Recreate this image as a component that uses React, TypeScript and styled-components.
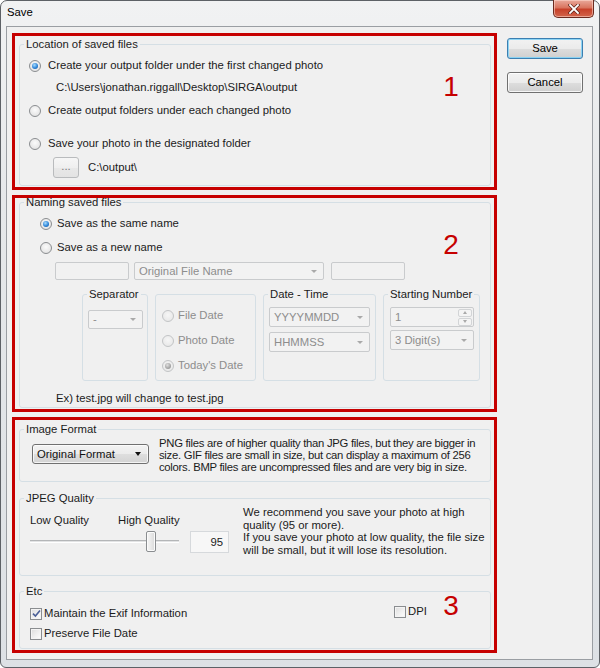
import React from "react";
import styled, { createGlobalStyle } from "styled-components";

const GlobalStyle = createGlobalStyle`
  html, body { margin: 0; padding: 0; background: #ffffff; }
  body {
    width: 600px; height: 668px; overflow: hidden;
    font-family: "Liberation Sans", Arial, sans-serif;
    font-size: 11.3px;
    color: #1b1b1b;
  }
  * { box-sizing: border-box; }
`;

const Window = styled.div`
  width: 600px;
  height: 668px;
  display: flex;
  flex-direction: column;
  border: 1px solid #5d6166;
  border-radius: 7px 7px 6px 6px;
  background: linear-gradient(180deg, #f1f2f3 0%, #e6e8ea 30%, #dde1e5 100%);
`;

const TitleBar = styled.div`
  height: 25px;
  flex: none;
  display: flex;
  align-items: flex-start;
  justify-content: space-between;
  padding-left: 6px;
`;

const Title = styled.span`
  margin-top: 5px;
  line-height: 13px;
  color: #000;
`;

const CloseButton = styled.div`
  width: 41px;
  height: 18px;
  margin: -1px 5px 0 0;
  border: 1px solid #6b2a1f;
  border-top: none;
  border-radius: 0 0 5px 5px;
  background: linear-gradient(180deg, #e9a99b 0%, #d9755f 45%, #c7412a 55%, #d2654c 100%);
  box-shadow: inset 0 0 0 1px rgba(255, 220, 210, 0.55);
  display: flex;
  align-items: center;
  justify-content: center;
`;

const Client = styled.div`
  flex: 1;
  margin: 0 6px 7px 5px;
  border: 1px solid #9a9ea3;
  background: #f0f0f0;
  display: flex;
  align-items: flex-start;
  padding: 6px 0 0 5px;
`;

const Sections = styled.div`
  width: 485px;
  flex: none;
  display: flex;
  flex-direction: column;
  gap: 5px;
`;

const Section = styled.section<{ $h: number; $pad: string }>`
  position: relative;
  height: ${(p) => p.$h}px;
  border: 3px solid #c60000;
  padding: ${(p) => p.$pad};
  display: flex;
  flex-direction: column;
`;

const Marker = styled.span<{ $top: number }>`
  position: absolute;
  left: 421px;
  top: ${(p) => p.$top}px;
  width: 30px;
  text-align: center;
  font-family: "Liberation Sans", Arial, sans-serif;
  font-size: 28px;
  line-height: 28px;
  color: #c60000;
`;

const Group = styled.fieldset<{ $h?: number; $w?: number; $top?: number }>`
  margin: ${(p) => p.$top ?? 0}px 0 0 0;
  padding: 0;
  min-width: 0;
  min-inline-size: 0;
  border: 1px solid #d5dfe5;
  border-radius: 3px;
  ${(p) => (p.$h ? `height: ${p.$h}px; flex: none;` : "flex: 1;")}
  ${(p) => (p.$w ? `width: ${p.$w}px; flex: none;` : "")}
`;

const Legend = styled.legend`
  margin-left: 4px;
  padding: 0 2px;
  line-height: 13px;
  color: #1b1b1b;
`;

const Panel = styled.div<{ $w: number; $h: number; $top: number }>`
  width: ${(p) => p.$w}px;
  height: ${(p) => p.$h}px;
  margin-top: ${(p) => p.$top}px;
  flex: none;
  border: 1px solid #d5dfe5;
  border-radius: 3px;
`;

const Body = styled.div<{ $pad?: string; $row?: boolean }>`
  padding: ${(p) => p.$pad ?? "0"};
  display: flex;
  flex-direction: ${(p) => (p.$row ? "row" : "column")};
  align-items: flex-start;
`;

const Row = styled.div<{ $top?: number; $indent?: number; $gap?: number; $h?: number; $muted?: boolean }>`
  display: flex;
  align-items: center;
  height: ${(p) => p.$h ?? 13}px;
  margin-top: ${(p) => p.$top ?? 0}px;
  margin-left: ${(p) => p.$indent ?? 0}px;
  gap: ${(p) => p.$gap ?? 0}px;
  white-space: nowrap;
  line-height: 13px;
  color: ${(p) => (p.$muted ? "#8d8d8d" : "#1b1b1b")};
`;

const Radio = styled.span<{ $checked?: boolean; $disabled?: boolean }>`
  width: 12px;
  height: 12px;
  flex: none;
  border-radius: 50%;
  border: 1px solid ${(p) => (p.$disabled ? "#c2c4c6" : "#8a8d90")};
  background: ${(p) =>
    p.$disabled
      ? "radial-gradient(circle at 50% 40%, #f6f6f6 0%, #e4e4e4 100%)"
      : "radial-gradient(circle at 50% 40%, #fbfbfb 0%, #e3e3e3 80%, #d4d4d4 100%)"};
  display: flex;
  align-items: center;
  justify-content: center;
  &::after {
    content: "";
    width: 6px;
    height: 6px;
    border-radius: 50%;
    display: ${(p) => (p.$checked ? "block" : "none")};
    background: ${(p) =>
      p.$disabled
        ? "radial-gradient(circle at 40% 35%, #e0e0e0 0%, #a4a4a4 60%, #8a8a8a 100%)"
        : "radial-gradient(circle at 40% 35%, #a8dcff 0%, #2f86d8 55%, #0d4a95 100%)"};
  }
`;

const Check = styled.span`
  width: 12px;
  height: 12px;
  flex: none;
  border: 1px solid #8a8d90;
  background: linear-gradient(135deg, #dcdcdc 0%, #f2f2f2 60%, #fdfdfd 100%);
  box-shadow: inset 0 0 0 1px #f4f4f4;
  display: flex;
  align-items: center;
  justify-content: center;
`;

const Input = styled.div<{ $w: number; $h: number; $left?: number }>`
  width: ${(p) => p.$w}px;
  height: ${(p) => p.$h}px;
  margin-left: ${(p) => p.$left ?? 0}px;
  flex: none;
  border: 1px solid #c9cbcd;
  border-radius: 2px;
  background: #f1f1f1;
`;

const Combo = styled.div<{ $w: number; $h: number; $top?: number; $left?: number }>`
  width: ${(p) => p.$w}px;
  height: ${(p) => p.$h}px;
  margin-top: ${(p) => p.$top ?? 0}px;
  margin-left: ${(p) => p.$left ?? 0}px;
  flex: none;
  border: 1px solid #c9cbcd;
  border-radius: 2px;
  background: #f2f2f2;
  color: #8d8d8d;
  display: flex;
  align-items: center;
  justify-content: space-between;
  padding: 0 6px 0 4px;
  line-height: 13px;
  white-space: nowrap;
`;

const Arrow = styled.span<{ $dark?: boolean }>`
  width: 0;
  height: 0;
  flex: none;
  border-left: ${(p) => (p.$dark ? 3.5 : 3)}px solid transparent;
  border-right: ${(p) => (p.$dark ? 3.5 : 3)}px solid transparent;
  border-top: ${(p) => (p.$dark ? 4 : 3)}px solid ${(p) => (p.$dark ? "#111" : "#a9a9a9")};
`;

const FormatCombo = styled.div`
  width: 117px;
  height: 20px;
  margin: 8px 0 0 12px;
  flex: none;
  border: 1px solid #707070;
  border-radius: 3px;
  background: linear-gradient(180deg, #f3f3f3 0%, #ebebeb 50%, #dedede 51%, #d3d3d3 100%);
  box-shadow: inset 0 0 0 1px rgba(255, 255, 255, 0.75);
  display: flex;
  align-items: center;
  justify-content: space-between;
  padding: 0 7px 0 4px;
  color: #111;
  white-space: nowrap;
`;

const Spin = styled.div`
  width: 84px;
  height: 20px;
  margin: 6px 0 0 6px;
  border: 1px solid #c9cbcd;
  border-radius: 2px;
  background: #f2f2f2;
  color: #8d8d8d;
  display: flex;
  align-items: center;
  justify-content: space-between;
  padding: 0 1px 0 4px;
`;

const SpinButtons = styled.div`
  width: 14px;
  height: 17px;
  display: flex;
  flex-direction: column;
  gap: 1px;
`;

const SpinButton = styled.div<{ $up?: boolean }>`
  flex: 1;
  border: 1px solid #d2d4d6;
  border-radius: 2px;
  background: #f4f4f4;
  display: flex;
  align-items: center;
  justify-content: center;
  &::after {
    content: "";
    width: 0;
    height: 0;
    border-left: 2.5px solid transparent;
    border-right: 2.5px solid transparent;
    ${(p) => (p.$up ? "border-bottom: 3px solid #a9a9a9;" : "border-top: 3px solid #a9a9a9;")}
  }
`;

const Browse = styled.div`
  width: 26px;
  height: 21px;
  flex: none;
  border: 1px solid #b9bbbd;
  border-radius: 3px;
  background: linear-gradient(180deg, #f6f6f6 0%, #efefef 50%, #e8e8e8 51%, #e3e3e3 100%);
  color: #7a7a7a;
  display: flex;
  align-items: center;
  justify-content: center;
  line-height: 13px;
  padding-bottom: 2px;
`;

const SubRow = styled.div`
  display: flex;
  align-items: flex-start;
  gap: 7px;
  margin: 8px 0 0 62px;
`;

const Paragraph = styled.div<{ $left: number; $lh: number; $tight?: number }>`
  margin: 1px 0 0 ${(p) => p.$left}px;
  line-height: ${(p) => p.$lh}px;
  letter-spacing: ${(p) => p.$tight ?? 0}px;
  color: #1b1b1b;
  white-space: nowrap;
`;

const Line = styled.div``;

const QualityBlock = styled.div`
  margin-left: 10px;
  display: flex;
  flex-direction: column;
`;

const QualityLabels = styled.div`
  display: grid;
  grid-template-columns: 88px auto;
  margin-top: 9px;
  line-height: 13px;
  white-space: nowrap;
`;

const SliderRow = styled.div`
  display: flex;
  align-items: flex-start;
  gap: 11px;
  margin-top: 4px;
`;

const Slider = styled.div`
  position: relative;
  width: 149px;
  height: 21px;
`;

const Track = styled.div`
  margin-top: 9px;
  height: 3px;
  border-top: 1px solid #b4b6b8;
  border-bottom: 1px solid #ffffff;
  background: #e2e3e4;
`;

const Thumb = styled.div`
  position: absolute;
  top: 0;
  width: 10px;
  height: 21px;
  border: 1px solid #8a8d90;
  border-radius: 2px;
  background: linear-gradient(90deg, #f6f6f6 0%, #e9e9e9 50%, #d9d9d9 100%);
  box-shadow: inset 0 0 0 1px #fbfbfb;
`;

const NumberBox = styled.div`
  width: 39px;
  height: 22px;
  border: 1px solid #d6d9dc;
  background: #f7f7f7;
  display: flex;
  align-items: center;
  justify-content: flex-end;
  padding-right: 5px;
  color: #1b1b1b;
`;

const EtcGrid = styled.div`
  display: grid;
  grid-template-columns: 364px auto;
  margin-left: 10px;
`;

const ButtonColumn = styled.div`
  margin-left: 10px;
  padding-top: 5px;
  display: flex;
  flex-direction: column;
  gap: 13px;
`;

const Button = styled.div<{ $default?: boolean }>`
  width: 76px;
  height: 21px;
  border: 1px solid ${(p) => (p.$default ? "#3c7fb1" : "#707070")};
  border-radius: 3px;
  background: linear-gradient(180deg, #f2f2f2 0%, #ebebeb 50%, #dddddd 51%, #cfcfcf 100%);
  box-shadow: inset 0 0 0 1px ${(p) => (p.$default ? "rgba(130, 210, 245, 0.9)" : "rgba(255, 255, 255, 0.8)")};
  display: flex;
  align-items: center;
  justify-content: center;
  color: #000;
  line-height: 13px;
`;

function CheckMark() {
  return (
    <svg width="9" height="9" viewBox="0 0 9 9">
      <path d="M1 4.6 L3.4 7 L8 1.5" fill="none" stroke="#4a5f97" strokeWidth="1.6" />
    </svg>
  );
}

function CloseGlyph() {
  return (
    <svg width="12" height="10" viewBox="0 0 12 10">
      <path d="M2 1 L10 9 M10 1 L2 9" stroke="#5a2016" strokeWidth="3.2" strokeLinecap="square" />
      <path d="M2 1 L10 9 M10 1 L2 9" stroke="#ffffff" strokeWidth="1.8" strokeLinecap="square" />
    </svg>
  );
}

export default function App() {
  const quality = 95;
  return (
    <>
      <GlobalStyle />
      <Window>
        <TitleBar>
          <Title>Save</Title>
          <CloseButton>
            <CloseGlyph />
          </CloseButton>
        </TitleBar>
        <Client>
          <Sections>
            <Section $h={157} $pad="2px 3px 1px 4px">
              <Group>
                <Legend>Location of saved files</Legend>
                <Body $pad="8px 0 0 0">
                  <Row $indent={9} $gap={7}>
                    <Radio $checked />
                    Create your output folder under the first changed photo
                  </Row>
                  <Row $top={9} $indent={36}>
                    C:\Users\jonathan.riggall\Desktop\SIRGA\output
                  </Row>
                  <Row $top={10} $indent={9} $gap={7}>
                    <Radio />
                    Create output folders under each changed photo
                  </Row>
                  <Row $top={20} $indent={9} $gap={7}>
                    <Radio />
                    Save your photo in the designated folder
                  </Row>
                  <Row $top={7} $indent={33} $gap={9} $h={21}>
                    <Browse>...</Browse>
                    C:\output\
                  </Row>
                </Body>
              </Group>
              <Marker $top={37}>1</Marker>
            </Section>

            <Section $h={217} $pad="0 3px 1px 4px">
              <Group $top={-2}>
                <Legend>Naming saved files</Legend>
                <Body $pad="8px 0 0 0">
                  <Row $indent={20} $gap={5}>
                    <Radio $checked />
                    Save as the same name
                  </Row>
                  <Row $top={11} $indent={20} $gap={5}>
                    <Radio />
                    Save as a new name
                  </Row>
                  <Row $top={8} $indent={35} $h={18}>
                    <Input $w={74} $h={18} />
                    <Combo $w={190} $h={18} $left={5}>
                      Original File Name
                      <Arrow />
                    </Combo>
                    <Input $w={74} $h={18} $left={7} />
                  </Row>
                  <SubRow>
                    <Group $w={66} $h={93}>
                      <Legend>Separator</Legend>
                      <Combo $w={55} $h={19} $top={9} $left={5}>
                        -
                        <Arrow />
                      </Combo>
                    </Group>
                    <Panel $w={101} $h={87} $top={6}>
                      <Body $pad="14px 0 0 6px">
                        <Row $gap={4} $muted>
                          <Radio $disabled />
                          File Date
                        </Row>
                        <Row $top={12} $gap={4} $muted>
                          <Radio $disabled />
                          Photo Date
                        </Row>
                        <Row $top={12} $gap={4} $muted>
                          <Radio $disabled $checked />
                          Today's Date
                        </Row>
                      </Body>
                    </Panel>
                    <Group $w={113} $h={93}>
                      <Legend>Date - Time</Legend>
                      <Combo $w={101} $h={20} $top={6} $left={5}>
                        YYYYMMDD
                        <Arrow />
                      </Combo>
                      <Combo $w={101} $h={20} $top={5} $left={5}>
                        HHMMSS
                        <Arrow />
                      </Combo>
                    </Group>
                    <Group $w={97} $h={93}>
                      <Legend>Starting Number</Legend>
                      <Spin>
                        1
                        <SpinButtons>
                          <SpinButton $up />
                          <SpinButton />
                        </SpinButtons>
                      </Spin>
                      <Combo $w={84} $h={20} $top={3} $left={6}>
                        3 Digit(s)
                        <Arrow />
                      </Combo>
                    </Group>
                  </SubRow>
                  <Row $top={11} $indent={36}>
                    Ex) test.jpg will change to test.jpg
                  </Row>
                </Body>
              </Group>
              <Marker $top={33}>2</Marker>
            </Section>

            <Section $h={236} $pad="3px 3px 1px 4px">
              <Group $h={59}>
                <Legend>Image Format</Legend>
                <Body $row>
                  <FormatCombo>
                    Original Format
                    <Arrow $dark />
                  </FormatCombo>
                  <Paragraph $left={10} $lh={12} $tight={-0.28}>
                    <Line>PNG files are of higher quality than JPG files, but they are bigger in</Line>
                    <Line>size. GIF files are small in size, but can display a maximum of 256</Line>
                    <Line>colors. BMP files are uncompressed files and are very big in size.</Line>
                  </Paragraph>
                </Body>
              </Group>
              <Group $h={84} $top={10}>
                <Legend>JPEG Quality</Legend>
                <Body $row>
                  <QualityBlock>
                    <QualityLabels>
                      <span>Low Quality</span>
                      <span>High Quality</span>
                    </QualityLabels>
                    <SliderRow>
                      <Slider>
                        <Track />
                        <Thumb style={{ left: `${Math.round((quality / 100) * 122)}px` }} />
                      </Slider>
                      <NumberBox>{quality}</NumberBox>
                    </SliderRow>
                  </QualityBlock>
                  <Paragraph $left={14} $lh={12.7}>
                    <Line>We recommend you save your photo at high</Line>
                    <Line>quality (95 or more).</Line>
                    <Line>If you save your photo at low quality, the file size</Line>
                    <Line>will be small, but it will lose its resolution.</Line>
                  </Paragraph>
                </Body>
              </Group>
              <Group $h={64} $top={9}>
                <Legend>Etc</Legend>
                <EtcGrid>
                  <Row $top={9} $gap={2}>
                    <Check>
                      <CheckMark />
                    </Check>
                    Maintain the Exif Information
                  </Row>
                  <Row $top={7} $gap={2}>
                    <Check />
                    DPI
                  </Row>
                  <Row $top={7} $gap={2}>
                    <Check />
                    Preserve File Date
                  </Row>
                </EtcGrid>
              </Group>
              <Marker $top={172}>3</Marker>
            </Section>
          </Sections>

          <ButtonColumn>
            <Button $default>Save</Button>
            <Button>Cancel</Button>
          </ButtonColumn>
        </Client>
      </Window>
    </>
  );
}
